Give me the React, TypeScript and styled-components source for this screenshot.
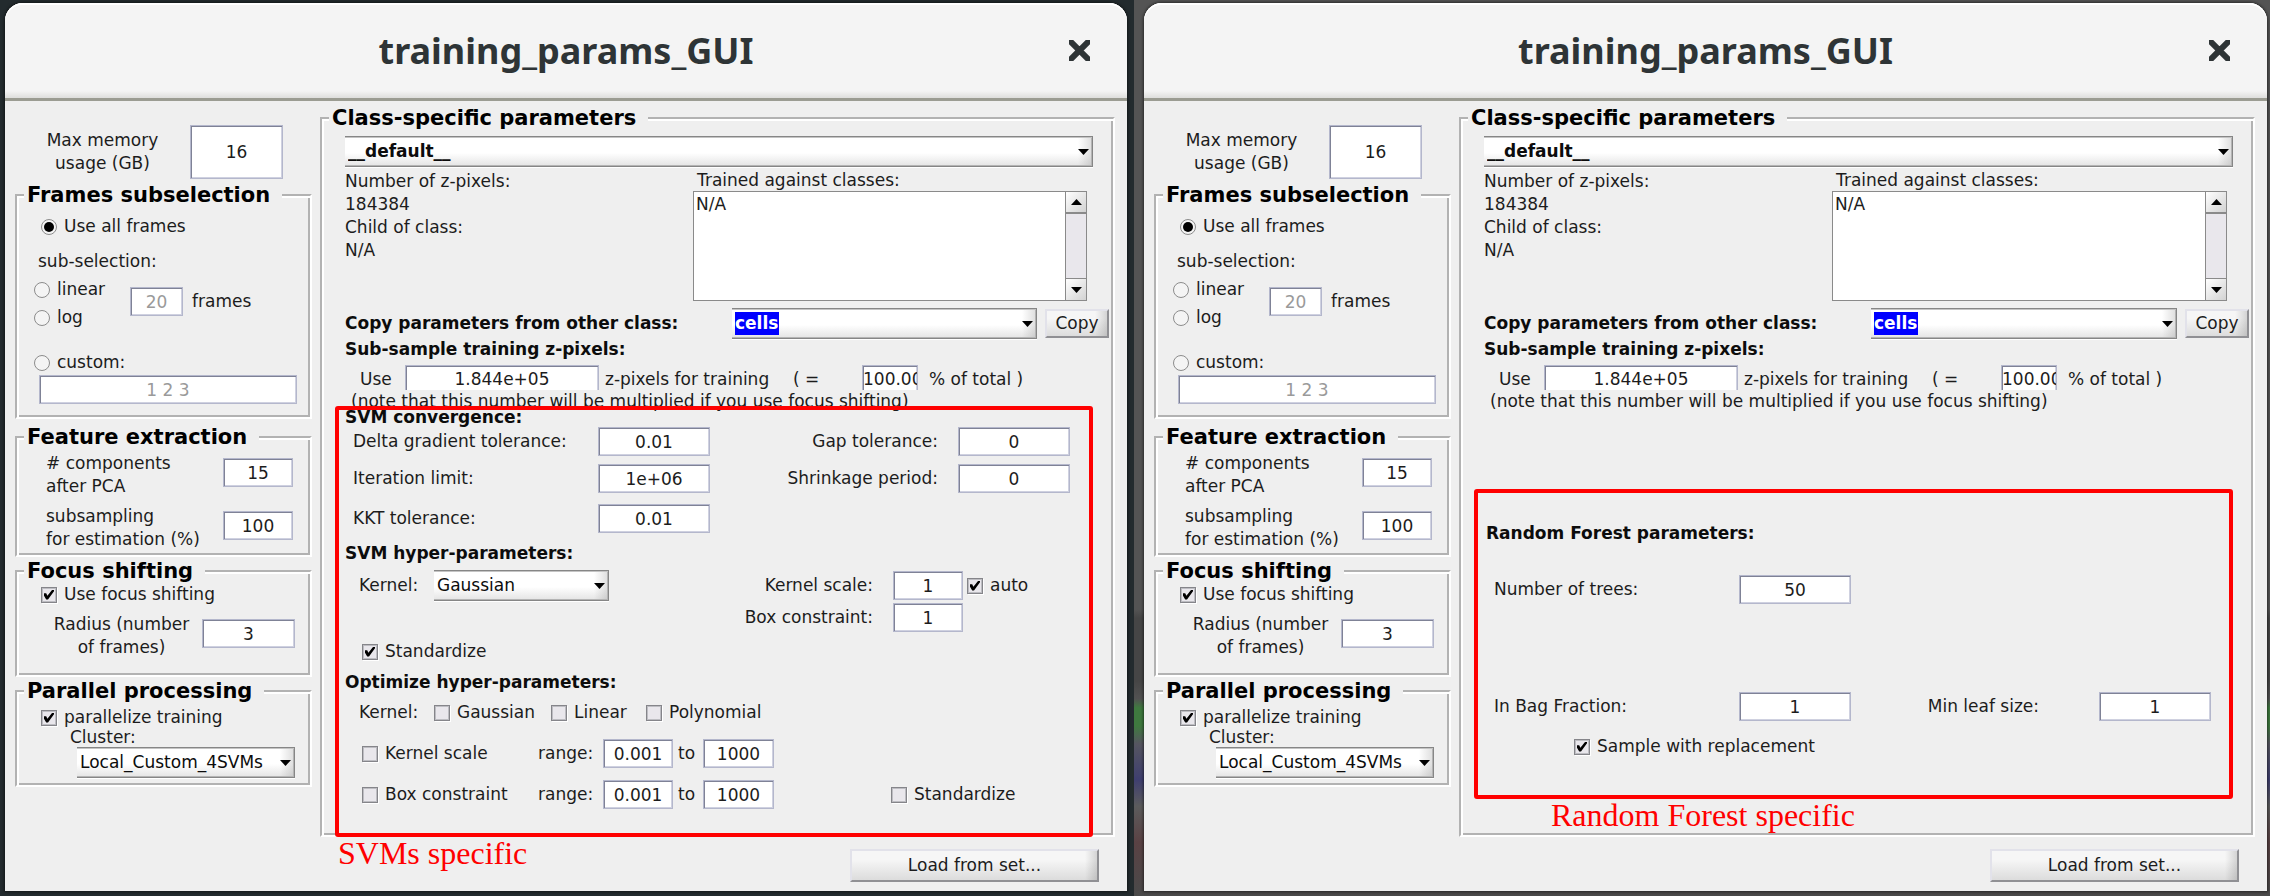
import React, { useId } from "react";
import styled, { createGlobalStyle, css } from "styled-components";

const ui = '"DejaVu Sans", Verdana, sans-serif';

const GlobalStyle = createGlobalStyle`
  *, *::before, *::after { box-sizing: border-box; }
  body { margin: 0; background: #3a3f41; font: 17px/23px ${ui}; color: #1c1c1c; }
  input, select, button { font: inherit; color: inherit; margin: 0; padding: 0; border-radius: 0; }
`;

const Desktop = styled.main`
  display: grid;
  grid-template-columns: 1134fr 1136fr;
  min-height: 100vh;
`;

const Screen = styled.div<{ $dark?: boolean }>`
  padding: ${(p) => (p.$dark ? "3px 7px 5px 5px" : "3px 3px 5px 10px")};
  background: ${(p) =>
    p.$dark
      ? "#232b2e"
      : "linear-gradient(#545454 68%, #464646 69%, #464646 76%, #525252 78%, #3f7a3f 79%, #3f7a3f 81%, #565660 83%, #3f3f70 87%, #5c5c5c 90%, #5a4244 94%, #4a4a4a)"};
`;

const Window = styled.section`
  background: #efefef;
  border-radius: 18px 18px 0 0;
  padding-bottom: 9px;
  box-shadow: 0 0 3px 1px rgba(0, 0, 0, 0.5);
`;

const TitleBar = styled.header`
  display: grid;
  grid-template-columns: 96px 1fr 96px;
  align-items: center;
  height: 98px;
  border-radius: 18px 18px 0 0;
  border-bottom: 3px solid #9b9c92;
  background: linear-gradient(#f4f4f4 88px, #dededc);
  box-shadow: inset 0 2px #fff;
`;

const Title = styled.h1`
  grid-column: 2;
  margin: 0;
  font: bold 36px/48px "Noto Sans", sans-serif;
  color: #2e3436;
  text-align: center;
`;

const CloseButton = styled.button`
  justify-self: center;
  display: flex;
  border: 0;
  background: none;
  color: #2e3436;
`;

const Body = styled.div`
  display: grid;
  grid-template-columns: 297px 1fr;
  column-gap: 8px;
  padding: 0 12px 0 10px;
`;

const Sidebar = styled.div`
  display: flex;
  flex-direction: column;
  padding-top: 24px;
`;

const Main = styled.div`
  padding-top: 5px;
`;

const Group = styled.fieldset`
  position: relative;
  min-width: 0;
  margin: 0;
  padding: 0;
  border: 2px solid;
  border-color: #b2b2b2 #fff #fff #b2b2b2;
  box-shadow: inset 2px 2px #fff, inset -2px -2px #b2b2b2;
`;

const GroupTitle = styled.legend`
  margin-left: 7px;
  padding: 0 12px 0 3px;
  background: #efefef;
  font-weight: bold;
  font-size: 21px;
  line-height: 24px;
  color: #000;
`;

const MemoryRow = styled.div`
  display: grid;
  grid-template-columns: 175px 93px;
  align-items: center;
  margin-bottom: 4px;
  text-align: center;
`;

const FramesBody = styled.div`
  display: grid;
  grid-template-rows: 35px 28px 73px 24px 29px;
  align-items: start;
  padding: 8px 13px 13px 17px;
`;

const FeatureBody = styled.div`
  display: grid;
  grid-template-columns: 177px 70px;
  row-gap: 7px;
  padding: 3px 0 4px 29px;
`;

const FocusBody = styled.div`
  display: grid;
  grid-template-rows: 30px 46px;
  align-items: start;
  padding: 0 13px 16px 24px;
`;

const RadiusRow = styled.div`
  display: grid;
  grid-template-columns: 161px 93px;
`;

const ParallelBody = styled.div`
  display: grid;
  grid-template-rows: 20px 21px 30px;
  align-items: start;
  padding: 3px 15px 8px 24px;
`;

const Indent = styled.div<{ $by: number }>`
  padding-left: ${(p) => p.$by}px;
`;

const Stack = styled.div<{ $gap?: number }>`
  display: flex;
  flex-direction: column;
  gap: ${(p) => p.$gap ?? 0}px;
`;

const SidebarGroups = styled.div`
  display: flex;
  flex-direction: column;
  gap: 2px;

  > :first-child { margin-bottom: 4px; }
`;

const SubselectionRow = styled.div`
  display: grid;
  grid-template-columns: 96px 53px 1fr;

  > :nth-child(n + 2) { margin-top: 9px; }
`;

const AfterField = styled.span`
  padding-left: 9px;
  line-height: 29px;
`;

const Caption = styled.label<{ $center?: boolean }>`
  white-space: pre;
  text-align: ${(p) => (p.$center ? "center" : "left")};
`;

const Heading = styled.h2`
  margin: 0;
  font-size: 17px;
  line-height: 21px;
  color: #0c0c0c;
`;

const TextField = styled.input<{ $tall?: boolean; $lowered?: boolean }>`
  display: block;
  width: 100%;
  min-width: 0;
  height: ${(p) => (p.$tall ? 54 : 29)}px;
  margin-top: ${(p) => (p.$lowered ? 6 : 0)}px;
  border: 1px solid #b4b7cc;
  background: #fff;
  box-shadow: inset 1px 1px #7f8296, inset -1px -1px #cfd1e0;
  text-align: center;
  outline: 0;

  &:disabled { color: #9a9a9a; }
`;

const mark = css`
  appearance: none;
  flex: none;
  display: grid;
  place-items: center;
  width: 16px;
  height: 16px;
`;

const Box = styled.input`
  ${mark}
  border: 1px solid #85858a;
  background: #e9e7ec;
  box-shadow: inset 0 0 0 1px #bdbdc2, 1px 1px #fff;

  &:checked::before {
    content: "";
    width: 10px;
    height: 10px;
    background: #000;
    clip-path: polygon(0 38%, 22% 38%, 34% 62%, 84% 0, 100% 0, 100% 18%, 40% 100%, 22% 100%, 0 62%);
  }
`;

const Dot = styled.input`
  ${mark}
  border: 1px solid #8c8c8c;
  border-radius: 50%;
  background: #f4f4f4;

  &:checked::before {
    content: "";
    width: 10px;
    height: 10px;
    border-radius: 50%;
    background: #000;
  }
`;

const Choice = styled.label`
  display: flex;
  align-items: center;
  gap: 7px;
  white-space: nowrap;
`;

const SelectFrame = styled.div`
  position: relative;
  min-width: 0;

  &::after {
    content: "";
    position: absolute;
    right: 4px;
    top: 13px;
    width: 11px;
    height: 6px;
    background: #000;
    clip-path: polygon(0 0, 100% 0, 50% 100%);
    pointer-events: none;
  }
`;

const DropDown = styled.select<{ $bold?: boolean; $selected?: boolean }>`
  appearance: none;
  display: block;
  width: 100%;
  height: 31px;
  padding: 0 18px 0 3px;
  border: 1px solid #868686;
  border-left: 0;
  background: linear-gradient(to right, transparent calc(100% - 14px), rgba(120, 120, 120, 0.25)),
    linear-gradient(#fff 55%, #e4e4e4);
  box-shadow: 0 1px #fff, inset 0 1px #c4c4c4, inset -1px -1px #b4b4b4;
  font-weight: ${(p) => (p.$bold ? "bold" : "normal")};
  color: #0c0c0c;
  outline: 0;
  ${(p) =>
    p.$selected &&
    css`
      color: #fff;
      background: linear-gradient(#00f, #00f) 3px 3px / 44px 23px no-repeat,
        linear-gradient(to right, transparent calc(100% - 14px), rgba(120, 120, 120, 0.25)),
        linear-gradient(#fff 55%, #e4e4e4);

      option { color: #000; }
    `}
`;

const PushButton = styled.button<{ $wide?: boolean }>`
  width: ${(p) => (p.$wide ? 249 : 64)}px;
  height: ${(p) => (p.$wide ? 33 : 29)}px;
  border: 2px solid;
  border-color: #e2e2ea #909094 #909094 #e2e2ea;
  background: linear-gradient(to right, transparent calc(100% - 12px), rgba(90, 90, 90, 0.22)),
    linear-gradient(#f6f6f6 30%, #dcdcdc);
`;

const PanelBody = styled.div`
  display: grid;
  grid-template-rows: 34px 138px 31px 26px 25px 17px auto;
  align-items: start;
  padding: 6px 20px 26px 23px;
`;

const InfoRow = styled.div`
  display: grid;
  grid-template-columns: 348px 1fr;
  padding-right: 6px;
`;

const ListCaption = styled.label`
  padding-left: 4px;
  line-height: 21px;
`;

const ListFrame = styled.div`
  display: grid;
  grid-template-columns: 1fr 21px;
  height: 110px;
  border: 1px solid #8a8a8a;
  background: #fff;
`;

const List = styled.select`
  appearance: none;
  height: 108px;
  padding-top: 2px;
  border: 0;
  background: #fff;
  overflow: hidden;
  outline: 0;

  option { padding: 0 2px; min-height: 23px; line-height: 23px; }
`;

const Scroll = styled.div`
  display: grid;
  grid-template-rows: 22px 1fr 22px;
  border-left: 1px solid #8a8a8a;
  background: #e9e7ec;
`;

const ScrollButton = styled.button<{ $down?: boolean }>`
  display: grid;
  place-items: center;
  border: 0 solid #8a8a8a;
  border-width: ${(p) => (p.$down ? "1px 0 0" : "0 0 2px")};
  background: linear-gradient(135deg, #fff, #d2d2d2);
`;

const CopyRow = styled.div`
  display: grid;
  grid-template-columns: 387px 1fr 64px;
  align-items: center;
  margin-right: -16px;

  ${SelectFrame} { margin-right: 8px; }
`;

const CopyLabel = styled.label`
  font-weight: bold;
  color: #0c0c0c;
`;

const UseRow = styled.div`
  display: grid;
  grid-template-columns: 45px 194px 194px 69px 56px 1fr;
  height: 25px;
  padding-left: 15px;
  line-height: 29px;
  overflow: hidden;
  white-space: pre;
`;

const Spaced = styled.span<{ $pad: number }>`
  padding-left: ${(p) => p.$pad}px;
`;

const Note = styled.p`
  margin: 0;
  padding-left: 6px;
  white-space: nowrap;
`;

const SvmBody = styled.div`
  display: grid;
  grid-template-rows: 20px 37px 40px 39px 27px 33px 37px 32px 29px 38px 41px 29px;
  align-items: start;
`;

const FieldPairs = styled.div`
  display: grid;
  grid-template-columns: 245px 112px 248px 112px;
  align-items: center;
  padding-left: 8px;
  white-space: nowrap;
`;

const RightLabel = styled.label<{ $far?: boolean }>`
  text-align: right;
  padding-right: ${(p) => (p.$far ? 60 : 20)}px;
`;

const KernelRow = styled.div`
  display: grid;
  grid-template-columns: 75px 175px 284px 70px 1fr;
  align-items: center;
  padding-left: 14px;

  ${Choice} { padding-left: 4px; }
`;

const KernelChoices = styled.div`
  display: grid;
  grid-template-columns: 75px 117px 95px 1fr;
  padding-left: 14px;
`;

const RangeRow = styled.div`
  display: grid;
  grid-template-columns: 176px 65px 70px 30px 71px 117px 1fr;
  align-items: center;
  padding-left: 17px;
`;

const ForestBody = styled.div`
  display: grid;
  grid-template-rows: 52px 117px 43px 59px;
  align-items: start;
  padding: 116px 0 15px 2px;
`;

const Frame = styled.div<{ $forest?: boolean }>`
  position: absolute;
  left: 13px;
  right: 20px;
  top: ${(p) => (p.$forest ? 359 : 276)}px;
  bottom: ${(p) => (p.$forest ? 36 : -2)}px;
  border: 4px solid #f00;
  border-radius: 3px;
  pointer-events: none;
`;

const FrameCaption = styled.span<{ $indent: number }>`
  position: absolute;
  left: ${(p) => p.$indent}px;
  top: 100%;
  font: 32px/40px "Liberation Serif", "Times New Roman", serif;
  color: #f00;
  white-space: nowrap;
`;

const Footer = styled.footer`
  display: flex;
  justify-content: flex-end;
  padding: 12px 16px 0 0;
`;

function Field({ label, value, tall, lowered, disabled, center }: {
  label: string; value: string; tall?: boolean; lowered?: boolean; disabled?: boolean; center?: boolean;
}) {
  const id = useId();
  return (
    <>
      <Caption htmlFor={id} $center={center}>{label}</Caption>
      <TextField id={id} defaultValue={value} $tall={tall} $lowered={lowered} disabled={disabled} />
    </>
  );
}

function RightField({ label, value, far }: { label: string; value: string; far?: boolean }) {
  const id = useId();
  return (
    <>
      <RightLabel htmlFor={id} $far={far}>{label}</RightLabel>
      <TextField id={id} defaultValue={value} />
    </>
  );
}

function Check({ label, checked }: { label: string; checked?: boolean }) {
  return (
    <Choice>
      <Box type="checkbox" defaultChecked={checked} />
      {label}
    </Choice>
  );
}

function Radio({ label, group, checked }: { label: string; group: string; checked?: boolean }) {
  return (
    <Choice>
      <Dot type="radio" name={group} defaultChecked={checked} />
      {label}
    </Choice>
  );
}

function Arrow({ down }: { down?: boolean }) {
  return (
    <svg width="11" height="6" viewBox="0 0 11 6" aria-hidden="true">
      <path d={down ? "M0 0h11L5.5 6z" : "M0 6h11L5.5 0z"} />
    </svg>
  );
}

function FramesGroup() {
  const group = useId();
  return (
    <Group>
      <GroupTitle>Frames subselection</GroupTitle>
      <FramesBody>
        <Indent $by={7}><Radio label="Use all frames" group={group} checked /></Indent>
        <Indent $by={4}>sub-selection:</Indent>
        <SubselectionRow>
          <Stack $gap={5}>
            <Radio label="linear" group={group} />
            <Radio label="log" group={group} />
          </Stack>
          <TextField aria-label="frames" defaultValue="20" disabled />
          <AfterField>frames</AfterField>
        </SubselectionRow>
        <Radio label="custom:" group={group} />
        <Indent $by={5}><TextField aria-label="custom" defaultValue="1 2 3" disabled /></Indent>
      </FramesBody>
    </Group>
  );
}

function ClusterSelect() {
  const id = useId();
  return (
    <>
      <Indent $by={29}><label htmlFor={id}>Cluster:</label></Indent>
      <Indent $by={36}>
        <SelectFrame>
          <DropDown id={id}><option>Local_Custom_4SVMs</option></DropDown>
        </SelectFrame>
      </Indent>
    </>
  );
}

function Settings() {
  return (
    <Sidebar>
      <MemoryRow><Field label={"Max memory\nusage (GB)"} value="16" tall center /></MemoryRow>
      <SidebarGroups>
        <FramesGroup />
        <Group>
          <GroupTitle>Feature extraction</GroupTitle>
          <FeatureBody>
            <Field label={"# components\nafter PCA"} value="15" lowered />
            <Field label={"subsampling\nfor estimation (%)"} value="100" lowered />
          </FeatureBody>
        </Group>
        <Group>
          <GroupTitle>Focus shifting</GroupTitle>
          <FocusBody>
            <Check label="Use focus shifting" checked />
            <RadiusRow><Field label={"Radius (number\nof frames)"} value="3" lowered center /></RadiusRow>
          </FocusBody>
        </Group>
        <Group>
          <GroupTitle>Parallel processing</GroupTitle>
          <ParallelBody>
            <Check label="parallelize training" checked />
            <ClusterSelect />
          </ParallelBody>
        </Group>
      </SidebarGroups>
    </Sidebar>
  );
}

function ClassInfo() {
  const list = useId();
  return (
    <InfoRow>
      <Stack>
        <span>Number of z-pixels:</span>
        <span>184384</span>
        <span>Child of class:</span>
        <span>N/A</span>
      </Stack>
      <Stack>
        <ListCaption htmlFor={list}>Trained against classes:</ListCaption>
        <ListFrame>
          <List id={list} size={4}><option>N/A</option></List>
          <Scroll>
            <ScrollButton aria-label="Scroll up"><Arrow /></ScrollButton>
            <span />
            <ScrollButton aria-label="Scroll down" $down><Arrow down /></ScrollButton>
          </Scroll>
        </ListFrame>
      </Stack>
    </InfoRow>
  );
}

function ClassPanel({ children }: { children: React.ReactNode }) {
  const copy = useId();
  const use = useId();
  return (
    <>
      <SelectFrame>
        <DropDown $bold aria-label="Class"><option>__default__</option></DropDown>
      </SelectFrame>
      <ClassInfo />
      <CopyRow>
        <CopyLabel htmlFor={copy}>Copy parameters from other class:</CopyLabel>
        <SelectFrame>
          <DropDown id={copy} $bold $selected><option>cells</option></DropDown>
        </SelectFrame>
        <PushButton>Copy</PushButton>
      </CopyRow>
      <Heading>Sub-sample training z-pixels:</Heading>
      <UseRow>
        <label htmlFor={use}>Use</label>
        <TextField id={use} defaultValue="1.844e+05" />
        <Spaced $pad={6}>z-pixels for training</Spaced>
        <span>( =</span>
        <TextField aria-label="Percent of total" defaultValue="100.00" />
        <Spaced $pad={11}>% of total )</Spaced>
      </UseRow>
      <Note>(note that this number will be multiplied if you use focus shifting)</Note>
      {children}
    </>
  );
}

function RangeFields({ label }: { label: string }) {
  return (
    <>
      <Check label={label} />
      <span>range:</span>
      <TextField aria-label={label + " from"} defaultValue="0.001" />
      <Spaced $pad={5}>to</Spaced>
      <TextField aria-label={label + " to"} defaultValue="1000" />
    </>
  );
}

function SvmParameters() {
  const kernel = useId();
  return (
    <SvmBody>
      <Heading>SVM convergence:</Heading>
      <FieldPairs>
        <Field label="Delta gradient tolerance:" value="0.01" />
        <RightField label="Gap tolerance:" value="0" />
      </FieldPairs>
      <FieldPairs>
        <Field label="Iteration limit:" value="1e+06" />
        <RightField label="Shrinkage period:" value="0" />
      </FieldPairs>
      <FieldPairs>
        <Field label="KKT tolerance:" value="0.01" />
      </FieldPairs>
      <Heading>SVM hyper-parameters:</Heading>
      <KernelRow>
        <label htmlFor={kernel}>Kernel:</label>
        <SelectFrame>
          <DropDown id={kernel}><option>Gaussian</option></DropDown>
        </SelectFrame>
        <RightField label="Kernel scale:" value="1" />
        <Check label="auto" checked />
      </KernelRow>
      <KernelRow>
        <span />
        <span />
        <RightField label="Box constraint:" value="1" />
      </KernelRow>
      <Indent $by={17}><Check label="Standardize" checked /></Indent>
      <Heading>Optimize hyper-parameters:</Heading>
      <KernelChoices>
        <span>Kernel:</span>
        <Check label="Gaussian" />
        <Check label="Linear" />
        <Check label="Polynomial" />
      </KernelChoices>
      <RangeRow><RangeFields label="Kernel scale" /></RangeRow>
      <RangeRow>
        <RangeFields label="Box constraint" />
        <span />
        <Check label="Standardize" />
      </RangeRow>
    </SvmBody>
  );
}

function ForestParameters() {
  return (
    <ForestBody>
      <Heading>Random Forest parameters:</Heading>
      <FieldPairs>
        <Field label="Number of trees:" value="50" />
      </FieldPairs>
      <FieldPairs>
        <Field label="In Bag Fraction:" value="1" />
        <RightField label="Min leaf size:" value="1" far />
      </FieldPairs>
      <Indent $by={88}><Check label="Sample with replacement" checked /></Indent>
    </ForestBody>
  );
}

function ParamsWindow({ forest }: { forest?: boolean }) {
  return (
    <Window>
      <TitleBar>
        <Title>training_params_GUI</Title>
        <CloseButton aria-label="Close">
          <svg width="21" height="21" viewBox="0 0 21 21" aria-hidden="true">
            <path d="M0 0l21 21M21 0L0 21" stroke="currentColor" strokeWidth="6" />
          </svg>
        </CloseButton>
      </TitleBar>
      <Body>
        <Settings />
        <Main>
          <Group>
            <GroupTitle>Class-specific parameters</GroupTitle>
            <PanelBody>
              <ClassPanel>{forest ? <ForestParameters /> : <SvmParameters />}</ClassPanel>
            </PanelBody>
            <Frame $forest={forest}>
              <FrameCaption $indent={forest ? 73 : -1}>
                {forest ? "Random Forest specific" : "SVMs specific"}
              </FrameCaption>
            </Frame>
          </Group>
          <Footer><PushButton $wide>Load from set...</PushButton></Footer>
        </Main>
      </Body>
    </Window>
  );
}

export default function App() {
  return (
    <>
      <GlobalStyle />
      <Desktop>
        <Screen $dark><ParamsWindow /></Screen>
        <Screen><ParamsWindow forest /></Screen>
      </Desktop>
    </>
  );
}
